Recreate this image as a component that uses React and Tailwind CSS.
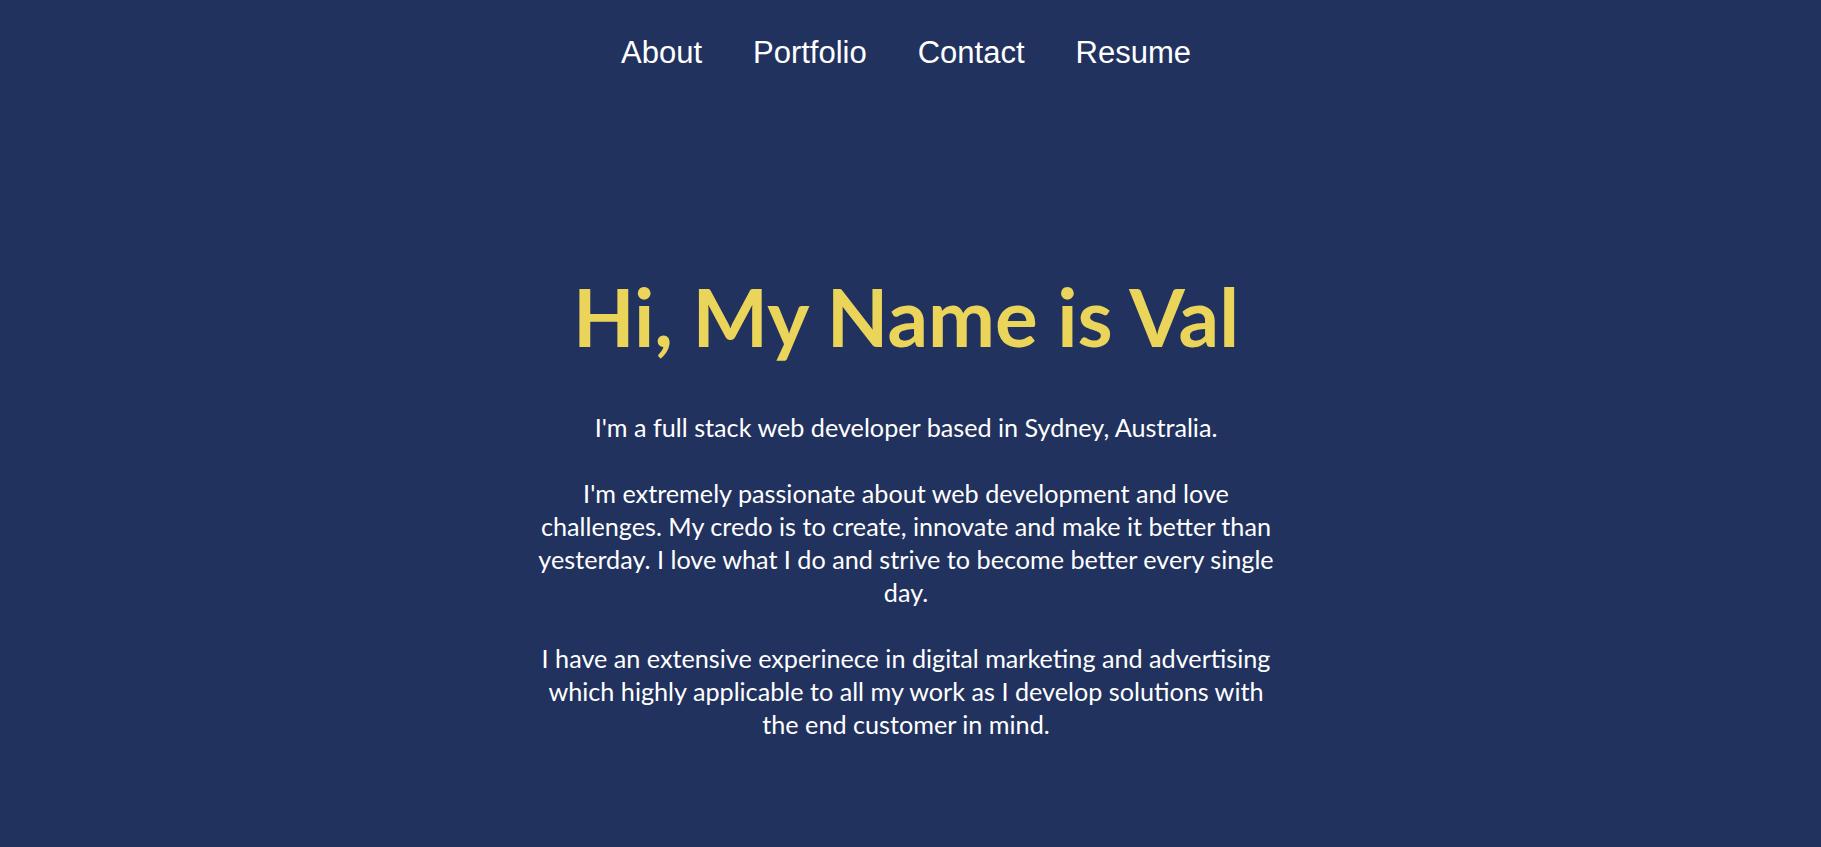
import React from 'react';

const links = ['About', 'Portfolio', 'Contact', 'Resume'];

const App = () => {
  return (
    <div className="min-h-screen bg-[#22325e] pr-[9px] text-white">
      {/* nav */}
      <nav className="flex justify-center gap-[51px] pt-[33px] font-['Liberation_Sans',Arial,sans-serif]">
        {links.map((l) => (
          <a key={l} href="#" className="text-[31px] leading-[40px] text-white">
            {l}
          </a>
        ))}
      </nav>

      <main className="mx-auto mt-[195px] max-w-[750px] text-center font-['Lato','Noto_Sans',sans-serif]">
        <h1 className="text-[80px] font-bold leading-[96px] text-[#ead45a]">Hi, My Name is Val</h1>
        <div className="mt-[47px] text-[25.2px] leading-[33px]">
          <p>I'm a full stack web developer based in Sydney, Australia.</p>
          <p className="mt-[33px]">
            I'm extremely passionate about web development and love challenges. My credo is to create, innovate and make it better than yesterday. I love what I do and strive to become better every single day.
          </p>
          <p className="mt-[33px]">
            I have an extensive experinece in digital marketing and advertising which highly applicable to all my work as I develop solutions with the end customer in mind.
          </p>
        </div>
      </main>
    </div>
  );
};

export default App;
